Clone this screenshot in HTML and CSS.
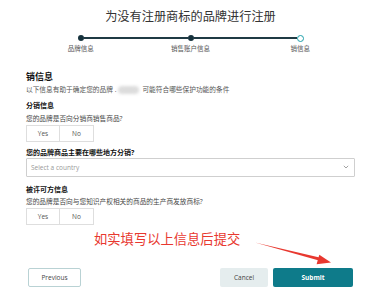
FILE: index.html
```html
<!DOCTYPE html>
<html lang="zh-CN">
<head>
    <meta charset="UTF-8">
    <meta name="viewport" content="width=device-width, initial-scale=1.0">
    <title>为没有注册商标的品牌进行注册</title>
    <link rel="stylesheet" href="styles.css">
</head>
<body>
    <h1 class="title">为没有注册商标的品牌进行注册</h1>

    <div class="steps">
        <div class="step first">
            <div class="track"><span class="dot"></span></div>
            <div class="step-label">品牌信息</div>
        </div>
        <div class="step">
            <div class="track"><span class="dot"></span></div>
            <div class="step-label">销售账户信息</div>
        </div>
        <div class="step last">
            <div class="track"><span class="dot current"></span></div>
            <div class="step-label">销信息</div>
        </div>
    </div>

    <div class="form">
        <h2 class="section-title">销信息</h2>
        <p class="desc">以下信息有助于确定您的品牌 .<span class="blur"></span>可能符合哪些保护功能的条件</p>

        <h3 class="sub-title">分销信息</h3>
        <p class="question">您的品牌是否向分销商销售商品?</p>
        <div class="choice">
            <button type="button">Yes</button>
            <button type="button">No</button>
        </div>

        <p class="question bold">您的品牌商品主要在哪些地方分销?</p>
        <div class="select">
            <span>Select a country</span>
            <svg width="6" height="4" viewBox="0 0 6 4"><path d="M0.8 0.8 L3 3 L5.2 0.8" fill="none" stroke="#999" stroke-width="0.9"/></svg>
        </div>

        <h3 class="sub-title licensee">被许可方信息</h3>
        <p class="question tight">您的品牌是否向与您知识产权相关的商品的生产商发放商标?</p>
        <div class="choice">
            <button type="button">Yes</button>
            <button type="button">No</button>
        </div>

        <p class="note">如实填写以上信息后提交</p>

        <div class="actions">
            <button type="button" class="btn btn-prev">Previous</button>
            <div class="actions-right">
                <button type="button" class="btn btn-cancel">Cancel</button>
                <button type="button" class="btn btn-submit">Submit</button>
            </div>
        </div>
    </div>

    <!-- red annotation arrow drawn over the page -->
    <svg class="arrow" width="381" height="302" viewBox="0 0 381 302">
        <path d="M255 242.6 L319.5 257.4 L318.9 260.6 Z" fill="#e8382f"/>
        <path d="M331 262.5 L316.6 264.3 L319.3 254.8 Z" fill="#e8382f"/>
    </svg>
</body>
</html>
```

FILE: styles.css
```css
body {
    margin: 0;
    width: 381px;
    height: 302px;
    position: relative;
    overflow: hidden;
    background: #fff;
    font-family: "Open Sans", "Noto Sans CJK SC", sans-serif;
    color: #333;
}
.title {
    margin: 0;
    padding-top: 9px;
    font-size: 12.2px;
    line-height: 16px;
    font-weight: normal;
    text-align: center;
    color: #333;
}
.steps {
    display: flex;
    padding: 0 26px;
    margin-top: 9px;
}
.step {
    flex: 1;
    display: flex;
    flex-direction: column;
    align-items: center;
}
.track {
    width: 100%;
    height: 8px;
    display: flex;
    align-items: center;
}
.track::before,
.track::after {
    content: '';
    flex: 1;
    height: 1.5px;
    background: #1f3a44;
}
.step.first .track::before,
.step.last .track::after {
    background: transparent;
}
.dot {
    width: 6px;
    height: 6px;
    border-radius: 50%;
    background: #16323d;
}
.dot.current {
    box-sizing: border-box;
    width: 7px;
    height: 7px;
    background: #fff;
    border: 1.5px solid #1ea0aa;
}
.step-label {
    margin-top: 1.5px;
    font-size: 6.5px;
    line-height: 9px;
    color: #555;
}
.form {
    padding: 0 26px;
}
.section-title {
    margin: 18px 0 0;
    font-size: 9px;
    line-height: 12px;
    font-weight: bold;
    color: #111;
}
.desc {
    margin: 2px 0 0;
    font-size: 6.7px;
    line-height: 10px;
    color: #555;
}
.blur {
    display: inline-block;
    width: 21px;
    height: 8px;
    margin: 0 3px 0 2px;
    vertical-align: middle;
    border-radius: 4px;
    background: #dcdcdc;
    filter: blur(1.5px);
}
.sub-title {
    margin: 6px 0 0;
    font-size: 7px;
    line-height: 10px;
    font-weight: bold;
    color: #111;
}
.sub-title.licensee {
    margin-top: 8px;
}
.question {
    margin: 3px 0 0;
    font-size: 6.7px;
    line-height: 10px;
    color: #444;
}
.question.bold {
    margin-top: 6px;
    font-size: 7px;
    font-weight: bold;
    color: #111;
}
.question.tight {
    margin-top: 2px;
}
.choice {
    display: flex;
    margin-top: 1px;
}
.choice button {
    box-sizing: border-box;
    width: 34px;
    height: 17px;
    padding: 0;
    border: 1px solid #dedede;
    background: #fff;
    font-family: inherit;
    font-size: 6.5px;
    color: #555;
}
.choice button + button {
    border-left: none;
}
.select {
    box-sizing: border-box;
    height: 19px;
    display: flex;
    align-items: center;
    justify-content: space-between;
    padding: 0 5px 0 4px;
    border: 1px solid #cfcfcf;
    border-radius: 1px;
    font-size: 6.5px;
    color: #999;
}
.note {
    margin: 6px 0 0 68px;
    font-size: 13.3px;
    line-height: 16px;
    color: #e8382f;
}
.actions {
    display: flex;
    justify-content: space-between;
    padding: 0 2px;
    margin-top: 21px;
}
.actions-right {
    display: flex;
    gap: 5px;
}
.btn {
    box-sizing: border-box;
    height: 19px;
    padding: 0;
    border-radius: 2px;
    font-family: inherit;
    font-size: 6.5px;
    cursor: pointer;
}
.btn-prev {
    width: 53px;
    border: 1px solid #b9d2d4;
    background: #fff;
    color: #444;
}
.btn-cancel {
    width: 48px;
    border: none;
    background: #e5edee;
    color: #444;
}
.btn-submit {
    width: 80px;
    border: none;
    background: #0e7b8a;
    color: #fff;
    font-weight: bold;
}
.arrow {
    position: absolute;
    top: 0;
    left: 0;
    pointer-events: none;
}
```
